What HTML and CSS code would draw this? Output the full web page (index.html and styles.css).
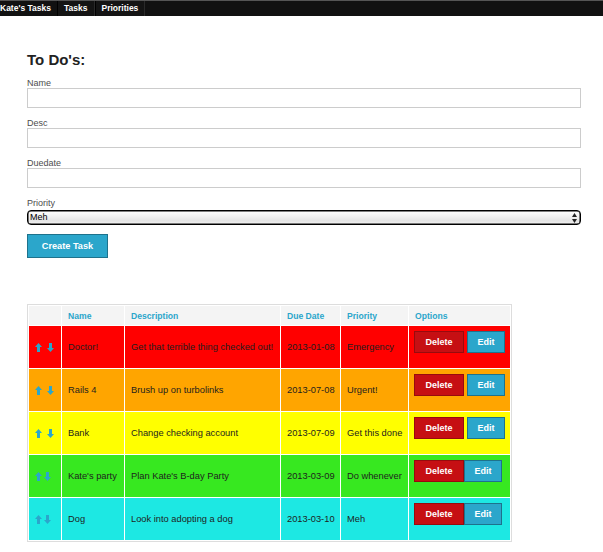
FILE: index.html
```html
<!DOCTYPE html>
<html>
<head>
<meta charset="utf-8">
<title>Kate's Tasks</title>
<link rel="stylesheet" href="styles.css">
</head>
<body>
<nav class="topbar">
  <ul class="nav">
    <li class="nav-title">Kate's Tasks</li>
    <li class="nav-item">Tasks</li>
    <li class="nav-item">Priorities</li>
  </ul>
</nav>
<main class="page">
  <h1 class="title">To Do's:</h1>
  <form class="task-form">
    <label class="field-label">Name</label>
    <input class="field-input" type="text">
    <label class="field-label">Desc</label>
    <input class="field-input" type="text">
    <label class="field-label">Duedate</label>
    <input class="field-input" type="text">
    <label class="field-label">Priority</label>
    <div class="select-wrap">
      <select class="field-select"><option>Meh</option></select>
      <svg class="select-arrows" width="5" height="10" viewBox="0 0 5 10"><path d="M2.5 0 L5 4 H0 Z M0 6 H5 L2.5 10 Z" fill="#222"/></svg>
    </div>
    <button class="btn-create" type="button">Create Task</button>
  </form>

  <table class="tasks">
    <colgroup>
      <col class="c-move"><col class="c-name"><col class="c-desc"><col class="c-date"><col class="c-prio"><col class="c-opts">
    </colgroup>
    <thead>
      <tr><th></th><th>Name</th><th>Description</th><th>Due Date</th><th>Priority</th><th>Options</th></tr>
    </thead>
    <tbody>
      <tr class="row-red">
        <td><span class="move"><svg class="arrow" viewBox="0 0 7 9"><path d="M3.5 0 L7 4 H5 V9 H2 V4 H0 Z"/></svg><svg class="arrow" viewBox="0 0 7 9"><path d="M2 0 H5 V5 H7 L3.5 9 L0 5 H2 Z"/></svg></span></td>
        <td>Doctor!</td><td>Get that terrible thing checked out!</td><td>2013-01-08</td><td>Emergency</td>
        <td class="opts"><div class="actions"><button class="btn btn-delete" type="button">Delete</button><button class="btn btn-edit" type="button">Edit</button></div></td>
      </tr>
      <tr class="row-orange">
        <td><span class="move"><svg class="arrow" viewBox="0 0 7 9"><path d="M3.5 0 L7 4 H5 V9 H2 V4 H0 Z"/></svg><svg class="arrow" viewBox="0 0 7 9"><path d="M2 0 H5 V5 H7 L3.5 9 L0 5 H2 Z"/></svg></span></td>
        <td>Rails 4</td><td>Brush up on turbolinks</td><td>2013-07-08</td><td>Urgent!</td>
        <td class="opts"><div class="actions"><button class="btn btn-delete" type="button">Delete</button><button class="btn btn-edit" type="button">Edit</button></div></td>
      </tr>
      <tr class="row-yellow">
        <td><span class="move"><svg class="arrow" viewBox="0 0 7 9"><path d="M3.5 0 L7 4 H5 V9 H2 V4 H0 Z"/></svg><svg class="arrow" viewBox="0 0 7 9"><path d="M2 0 H5 V5 H7 L3.5 9 L0 5 H2 Z"/></svg></span></td>
        <td>Bank</td><td>Change checking account</td><td>2013-07-09</td><td>Get this done</td>
        <td class="opts"><div class="actions"><button class="btn btn-delete" type="button">Delete</button><button class="btn btn-edit" type="button">Edit</button></div></td>
      </tr>
      <tr class="row-green">
        <td><span class="move move-tight"><svg class="arrow" viewBox="0 0 7 9"><path d="M3.5 0 L7 4 H5 V9 H2 V4 H0 Z"/></svg><svg class="arrow" viewBox="0 0 7 9"><path d="M2 0 H5 V5 H7 L3.5 9 L0 5 H2 Z"/></svg></span></td>
        <td>Kate's party</td><td>Plan Kate's B-day Party</td><td>2013-03-09</td><td>Do whenever</td>
        <td class="opts"><div class="actions actions-tight"><button class="btn btn-delete" type="button">Delete</button><button class="btn btn-edit" type="button">Edit</button></div></td>
      </tr>
      <tr class="row-cyan">
        <td><span class="move move-tight"><svg class="arrow" viewBox="0 0 7 9"><path d="M3.5 0 L7 4 H5 V9 H2 V4 H0 Z"/></svg><svg class="arrow" viewBox="0 0 7 9"><path d="M2 0 H5 V5 H7 L3.5 9 L0 5 H2 Z"/></svg></span></td>
        <td>Dog</td><td>Look into adopting a dog</td><td>2013-03-10</td><td>Meh</td>
        <td class="opts"><div class="actions actions-tight"><button class="btn btn-delete" type="button">Delete</button><button class="btn btn-edit" type="button">Edit</button></div></td>
      </tr>
    </tbody>
  </table>
</main>
</body>
</html>
```

FILE: styles.css
```css
* { box-sizing: border-box; }

body {
  margin: 0;
  font-family: "Liberation Sans", Arial, sans-serif;
  color: #222;
  background: #fff;
}

/* top bar */
.topbar {
  height: 16px;
  background: #111;
  border-top: 1px solid #555;
}
.nav {
  list-style: none;
  margin: 0;
  padding: 0;
  display: flex;
  height: 15px;
}
.nav li {
  font-size: 8.5px;
  font-weight: bold;
  color: #fff;
  line-height: 15px;
  white-space: nowrap;
}
.nav-title {
  padding: 0 6px 0 0;
}
.nav-item {
  padding: 0 6px;
  border-left: 1px solid #000;
  border-right: 1px solid #2a2a2a;
  background: #141414;
}

/* page */
.page {
  padding: 0 0 0 27px;
}
.title {
  margin: 35px 0 9px;
  font-size: 15px;
  line-height: 18px;
  font-weight: bold;
  color: #222;
}

.task-form {
  width: 554px;
}
.field-label {
  display: block;
  font-size: 9px;
  line-height: 10px;
  color: #4d4d4d;
}
.field-input {
  display: block;
  width: 554px;
  height: 20px;
  margin: 0 0 10px;
  padding: 0 4px;
  border: 1px solid #ccc;
  background: #fff;
  font-family: inherit;
  font-size: 9px;
}
.select-wrap {
  position: relative;
  width: 554px;
  margin-top: 2px;
}
.field-select {
  display: block;
  width: 554px;
  height: 15px;
  margin: 0;
  padding: 0 12px 0 2px;
  border: 1px solid #000;
  border-radius: 4px;
  -webkit-appearance: none;
  appearance: none;
  background: linear-gradient(#ffffff, #f0f0f0 45%, #e4e4e4 75%, #f2f2f2);
  font-family: inherit;
  font-size: 9px;
  line-height: 13px;
  color: #000;
  box-shadow: inset 0 0 0 0.5px #000;
}
.select-arrows {
  position: absolute;
  right: 4px;
  top: 3px;
}

.btn-create {
  display: block;
  margin-top: 9px;
  width: 81px;
  height: 24px;
  padding: 0;
  background: #2ba6cb;
  border: 1px solid #1e728c;
  color: #fff;
  font-family: inherit;
  font-size: 9.2px;
  font-weight: bold;
}

/* table */
.tasks {
  margin-top: 46px;
  width: 485px;
  table-layout: fixed;
  border-collapse: separate;
  border-spacing: 1px;
  border: 1px solid #ddd;
  background: #fff;
}
.c-move { width: 32px; }
.c-name { width: 62px; }
.c-desc { width: 155px; }
.c-date { width: 59px; }
.c-prio { width: 67px; }
.c-opts { width: 101px; }

.tasks th {
  height: 19px;
  padding: 0 4px 0 6px;
  background: #f4f4f4;
  color: #2ba6cb;
  font-size: 8.6px;
  font-weight: bold;
  text-align: left;
  white-space: nowrap;
}
.tasks td {
  height: 42px;
  padding: 0 3px 0 6px;
  font-size: 9.3px;
  color: #1e1e1e;
  vertical-align: middle;
  white-space: nowrap;
}
.tasks td.opts {
  vertical-align: top;
  padding: 5px 0 0 5px;
}

.row-red td { background: #ff0000; }
.row-orange td { background: #ffa500; }
.row-yellow td { background: #ffff00; }
.row-green td { background: #37e820; }
.row-cyan td { background: #1de8e3; }

.move {
  display: flex;
  gap: 5px;
  align-items: center;
}
.move-tight { gap: 2px; }
.arrow {
  width: 7px;
  height: 9px;
  fill: #2ba6cb;
}

.actions {
  display: flex;
  gap: 3px;
}
.actions-tight { gap: 0; }
.btn {
  height: 22px;
  padding: 0;
  color: #fff;
  font-family: inherit;
  font-size: 9px;
  font-weight: bold;
  border: 1px solid;
}
.btn-delete {
  width: 50px;
  background: #c60f13;
  border-color: #970b0e;
}
.btn-edit {
  width: 38px;
  background: #2ba6cb;
  border-color: #1e728c;
}
```
